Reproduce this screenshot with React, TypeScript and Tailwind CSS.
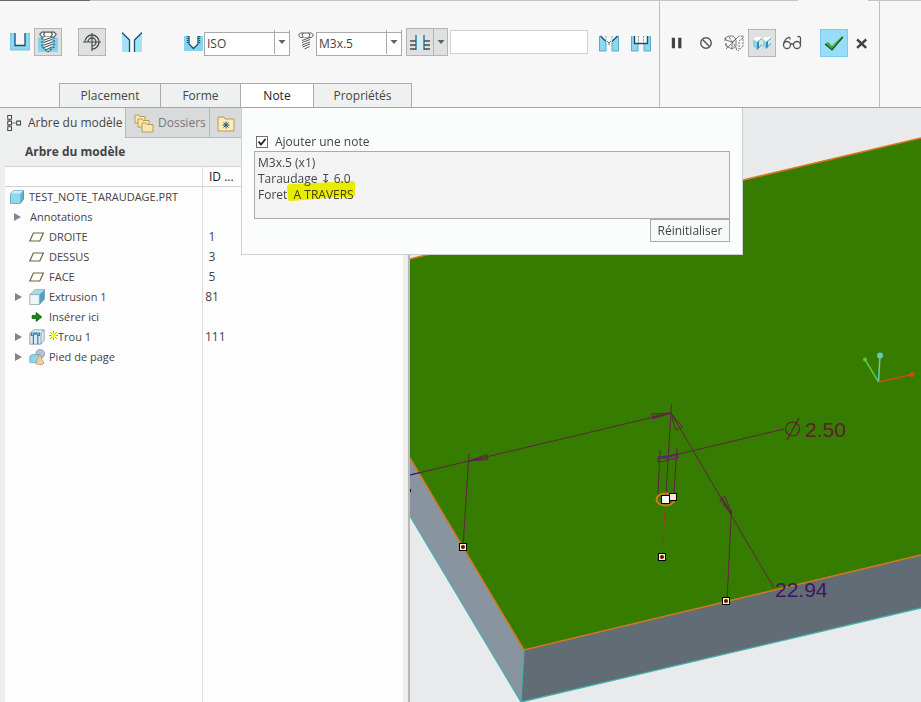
import React, { useState } from "react";

const treeRows = [
  { icon: "plane", label: "DROITE", id: "1", arrow: false },
  { icon: "plane", label: "DESSUS", id: "3", arrow: false },
  { icon: "plane", label: "FACE", id: "5", arrow: false },
  { icon: "extrusion", label: "Extrusion 1", id: "81", arrow: true },
  { icon: "insert", label: "Insérer ici", id: "", arrow: false },
  { icon: "hole", label: "Trou 1", id: "111", arrow: true },
  { icon: "footer", label: "Pied de page", id: "", arrow: true },
];

function Icon({ children, className }: { children: React.ReactNode; className?: string }) {
  return (
    <svg viewBox="0 0 20 20" fill="none" aria-hidden="true" className={className || "h-5 w-5 shrink-0"}>
      {children}
    </svg>
  );
}

// Shared by the hole type button and the screw size label
function ScrewShape() {
  return (
    <g stroke="#555" fill="#fff">
      <path d="M4.500 1h11l2 2-2 2.500h-11l-2-2.500z" />
      <path d="M7.500 1l-1.500 2 1.500 2.500M12.500 1l1.500 2-1.500 2.500" />
      <path d="M6.500 5.500h7v8.500L10 18l-3.500-4z" stroke="none" />
      <path d="M6 8.500l8-3M6 10.500l8-3M6 13l8-3M6.500 15l7.500-3M8.500 17l5-2.500" />
    </g>
  );
}

function TreeIcon({ name }: { name: string }) {
  if (name === "plane")
    return (
      <Icon className="h-4 w-4 shrink-0">
        <path d="M5.500 5h12.500l-4.500 10H1z" fill="#fffef5" stroke="#6f6647" strokeWidth="1.500" />
      </Icon>
    );
  if (name === "extrusion")
    return (
      <Icon className="h-4 w-4 shrink-0">
        <path d="M1 7l7-6.500h11.500v12L13 19.500V7z" fill="#4fa3c4" stroke="#7f96a3" />
        <path d="M1 7l7-6.500h11.500L13 7z" fill="#a9dcea" />
        <path d="M1 7h12v12.500H1z" fill="#eef6fa" stroke="#8fa0ac" />
      </Icon>
    );
  if (name === "insert")
    return (
      <Icon className="h-4 w-4 shrink-0">
        <path d="M4 8h5V4.500l7 5.500-7 5.500V12H4z" fill="#118a11" stroke="#075607" />
      </Icon>
    );
  if (name === "hole")
    return (
      <Icon className="h-4 w-4 shrink-0">
        <path d="M1 5l5-4h13v13l-4.500 5H1z" fill="#dcebf1" stroke="#8796a0" />
        <path d="M15 19V5l4-4" stroke="#8796a0" />
        <path d="M3 5h10v3h-2v11M3 5v3h2.500v11M5.500 8C6 5.500 10.500 5.500 11 8" stroke="#2585a8" strokeWidth="1.500" />
      </Icon>
    );
  return (
    <Icon className="h-4 w-4 shrink-0">
      <circle cx="14" cy="6" r="5.500" fill="#b3c0de" stroke="#8996b8" />
      <path d="M1 9l3-2h8v8l-2 2H1z" fill="#8dd5e8" stroke="#64a8bd" />
      <path d="M13.500 6l5 12c-2 2-8 2-10 0z" fill="#efd29b" stroke="#c09a5d" />
    </Icon>
  );
}

function Expander() {
  return (
    <button type="button" aria-label="Développer" className="flex h-5 w-2 shrink-0 items-center">
      <svg viewBox="0 0 8 10" className="h-[10px] w-2" aria-hidden="true">
        <path d="M0 1l7 4-7 4z" fill="#858585" />
      </svg>
    </button>
  );
}

function DropDown({ label, value }: { label: string; value: string }) {
  return (
    <div className="relative h-6 w-[86px] shrink-0">
      <select
        aria-label={label}
        defaultValue={value}
        className="h-full w-full appearance-none border border-[#a9a9a9] bg-white pl-[2px] text-xs text-[#444]"
      >
        <option>{value}</option>
      </select>
      <span className="pointer-events-none absolute inset-y-0 right-0 flex w-4 items-center justify-center border-x border-[#a9a9a9]">
        <svg viewBox="0 0 8 5" className="h-[5px] w-2" aria-hidden="true">
          <path d="M0.500 0h7L4 4z" fill="#606060" />
        </svg>
      </span>
    </div>
  );
}

function Toolbar() {
  return (
    <div className="flex h-[82px] items-center pl-[6px]">
      <button type="button" aria-label="Trou simple" className="flex h-7 w-7 items-center justify-center">
        <Icon>
          <path d="M0 1h20v17H0z" fill="#8ad8f2" />
          <path d="M5 1h10v12H5z" fill="#f7f7f7" />
          <path d="M5 1v12.500h10V1" stroke="#174f75" strokeWidth="1.300" />
          <path d="M0 1v17h20V1" stroke="#5cacce" strokeWidth=".7" />
        </Icon>
      </button>
      <button type="button" aria-label="Trou standard" className="flex h-7 w-7 items-center justify-center border border-[#b5b5b5] bg-[#dfe0e0]">
        <Icon className="h-[22px] w-[22px]">
          <path d="M1 6h18v13H1z" fill="#85d2ee" />
          <path d="M4.500 6v8.500l5.500 4.500 5.500-4.500V6" stroke="#174f75" strokeDasharray="2 1" />
          <ScrewShape />
        </Icon>
      </button>
      <button type="button" aria-label="Orientation" className="ml-4 flex h-7 w-7 items-center justify-center border border-[#b5b5b5] bg-[#dfe0e0]">
        <Icon>
          <path d="M1 10h18M10 1v18" stroke="#4d4d4d" strokeWidth="1.200" />
          <path d="M3 10a7 7 0 1 1 14 0M10 17a7 7 0 0 0 7-7" stroke="#4d4d4d" strokeWidth="1.300" />
          <path d="M6 10a4 4 0 1 1 4 4" stroke="#4d4d4d" strokeWidth="1.300" />
        </Icon>
      </button>
      <button type="button" aria-label="Fraisage" className="ml-3 flex h-7 w-7 items-center justify-center">
        <Icon>
          <path d="M0 1l7.500 7v12H0zM20 1l-7.500 7v12H20z" fill="#a3e2f6" />
          <path d="M0 .5l7.500 7.500v12M20 .5L12.500 8v12" stroke="#174f75" strokeWidth="1.300" />
        </Icon>
      </button>
      <div className="ml-[38px] flex items-center">
        <Icon>
          <path d="M0 4h19v15H0z" fill="#86d4f0" />
          <path d="M5 4v8l4.500 4.500L14 12V4z" fill="#f7f7f7" />
          <path d="M5 4v8l4.500 4.500L14 12V4" stroke="#174f75" strokeWidth="1.300" />
          <path d="M3.500 4v8M15.500 4v8" stroke="#174f75" strokeWidth="1.500" strokeDasharray="1 1" />
        </Icon>
        <DropDown label="Norme" value="ISO" />
      </div>
      <div className="ml-[6px] flex items-center">
        <Icon>
          <ScrewShape />
        </Icon>
        <DropDown label="Taille de vis" value="M3x.5" />
      </div>
      <button type="button" aria-label="Profondeur" className="ml-1 flex h-7 w-[42px] shrink-0 border border-[#b5b5b5] bg-[#dfe0e0]">
        <span className="flex h-full w-[27px] items-center justify-center border-r border-[#b5b5b5]">
          <Icon>
            <path d="M7 3h6v15H7z" fill="#d6ebf3" />
            <path d="M6 3v15M14 3v15" stroke="#2b82ab" strokeWidth="1.500" />
            <path d="M0 9h6M0 13h6M0 17h6M14 9h6M14 13h6M14 17h6" stroke="#4b4b4b" strokeWidth="1.600" />
          </Icon>
        </span>
        <span className="flex h-full flex-1 items-center justify-center">
          <svg viewBox="0 0 8 5" className="h-[5px] w-2" aria-hidden="true">
            <path d="M0.500 0h7L4 4z" fill="#606060" />
          </svg>
        </span>
      </button>
      <input type="text" aria-label="Valeur" className="ml-[2px] h-6 w-[138px] border border-[#cfcfcf] bg-white px-1 text-xs" />
      <button type="button" aria-label="Ajouter un fraisage" className="ml-[7px] flex h-7 w-7 items-center justify-center">
        <Icon>
          <path d="M0 4h1l6 6v9H0zM20 4h-1l-6 6v9h7z" fill="#8bd8f2" />
          <path d="M.5 4v15H7v-9M19.500 4v15H13v-9" stroke="#5aa9c6" />
          <path d="M1.500 4L7 9.500M18.500 4L13 9.500" stroke="#174f75" strokeWidth="1.400" />
          <path d="M7 4v4M13 4v4" stroke="#8a9a8e" strokeDasharray="2 1" />
          <path d="M8 9l2 2 2-2M10 11v2" stroke="#5b7d6c" />
        </Icon>
      </button>
      <button type="button" aria-label="Ajouter un lamage" className="ml-1 flex h-7 w-7 items-center justify-center">
        <Icon>
          <path d="M0 4h3v7h4v8H0zM20 4h-3v7h-4v8h7z" fill="#8bd8f2" />
          <path d="M.5 4v15H7v-7M19.500 4v15H13v-7" stroke="#5aa9c6" />
          <path d="M3.500 4v7.500h13V4" stroke="#174f75" strokeWidth="1.400" />
          <path d="M7.500 4v7M12.500 4v7" stroke="#8a9a8e" strokeDasharray="2 1" />
        </Icon>
      </button>
    </div>
  );
}

function ControlBar() {
  return (
    <div className="flex h-[84px] items-center pl-2">
      <button type="button" aria-label="Pause" className="flex h-7 w-[18px] items-center justify-center">
        <Icon className="h-5 w-4 shrink-0">
          <path d="M5.500 3.500v13M13.500 3.500v13" stroke="#424242" strokeWidth="4" />
        </Icon>
      </button>
      <button type="button" aria-label="Aucun aperçu" className="ml-[6px] flex h-7 w-7 items-center justify-center">
        <Icon className="h-[14px] w-[14px]">
          <circle cx="10" cy="10" r="7.500" stroke="#555" strokeWidth="2" />
          <path d="M5 5l10 10" stroke="#555" strokeWidth="2" />
        </Icon>
      </button>
      <button type="button" aria-label="Aperçu détaché" className="flex h-7 w-7 items-center justify-center">
        <Icon>
          <g stroke="#666" strokeWidth=".9">
            <path d="M1 5l4-2h4l3 3-4 3-6-2zM1 5v3M8 9v7l-6-3v-3M8 16l4-3V7" />
            <path d="M12 6l3-3h4M19 3v10l-5 5-3-3M19 5l-4 3v8" strokeDasharray="2 1" />
            <path d="M2 16L14 4M5 4l8 12M1 11l4 3" strokeDasharray="3 1" />
          </g>
        </Icon>
      </button>
      <button type="button" aria-label="Aperçu attaché" className="flex h-7 w-7 items-center justify-center border border-[#b5b5b5] bg-[#dfe0e0]">
        <Icon>
          <path d="M1 6l3-2h6l-1 3-4 2zM11 6l2-2h6l-1 2-4 3z" fill="#fff" />
          <path d="M1 6l4 3v8l-4-4zM11 6l3 3v7l-3-3z" fill="#8bd0e8" />
          <path d="M5 9l5-4v7l-5 5zM14 9l5-4v6l-5 5z" fill="#2f8fb5" />
          <path d="M7 8l3-2v5l-3 3zM16 8l3-2v4l-3 3z" fill="#c9eaf4" />
        </Icon>
      </button>
      <button type="button" aria-label="Vérifier" className="ml-[2px] flex h-7 w-7 items-center justify-center">
        <Icon>
          <g stroke="#555" strokeWidth="1.300">
            <circle cx="5" cy="12" r="3.500" />
            <circle cx="15" cy="12" r="3.500" />
            <path d="M8.500 11.500c1-1 2-1 3 0M1.500 11C2 8 5 4 7.500 4.500c1 .3.500 1.500.5 2M18.500 12V5c0-1.500-2-2-3-1" />
          </g>
        </Icon>
      </button>
      <button type="button" aria-label="Valider" className="ml-[14px] flex h-7 w-7 items-center justify-center border border-[#78cdf0] bg-[#99dcf7]">
        <Icon>
          <path d="M1 11l3-2 4 4L17.500 3.500l1.500.5L8 17z" fill="#46a843" />
          <path d="M1 11l7 6L19 4" stroke="#14591d" strokeWidth="1.200" />
        </Icon>
      </button>
      <button type="button" aria-label="Annuler" className="flex h-7 w-7 items-center justify-center">
        <Icon className="h-[14px] w-[14px]">
          <path d="M3 5l13 12M16 5L3 17" stroke="#424242" strokeWidth="3.500" />
        </Icon>
      </button>
    </div>
  );
}

function NotePanel() {
  const [addNote, setAddNote] = useState(true);
  const [note, setNote] = useState("M3x.5 (x1)\nTaraudage ↧ 6.0\nForet  A TRAVERS");

  return (
    <section
      aria-label="Note"
      className="absolute top-full left-0 z-10 mt-px w-[502px] border border-t-0 border-[#cfcfcf] bg-[#fbfcfc] px-3 pt-[25px] pb-3"
    >
      <label className="flex h-[18px] items-center gap-[7px] text-xs text-[#444]">
        <input
          type="checkbox"
          checked={addNote}
          onChange={(e) => setAddNote(e.target.checked)}
          className="peer sr-only"
        />
        <span className="ml-[2px] flex h-3 w-3 items-center justify-center border border-[#707070] bg-white text-transparent peer-checked:text-[#222]">
          <svg viewBox="0 0 10 10" fill="none" className="h-[10px] w-[10px]" aria-hidden="true">
            <path d="M1.500 4.500l2.500 3L8.500 2" stroke="currentColor" strokeWidth="1.800" />
          </svg>
        </span>
        Ajouter une note
      </label>
      <div className="relative">
        <textarea
          aria-label="Texte de la note"
          value={note}
          onChange={(e) => setNote(e.target.value)}
          className="block h-[68px] w-full resize-none border border-[#ababab] bg-[#f3f3f3] px-[3px] py-[3px] font-['Open_Sans','DejaVu_Sans',sans-serif] text-xs leading-4 text-[#444]"
        />
        <svg viewBox="0 0 70 22" className="pointer-events-none absolute top-[29px] left-8 h-[22px] w-[70px] mix-blend-multiply" aria-hidden="true">
          <path d="M1 7q0-3 4-3L30 3 66 1q4 0 3 5v8q0 3-4 3H50L6 21q-4 1-4-2z" fill="#f4f800" />
        </svg>
      </div>
      <div className="flex justify-end">
        <button type="button" className="h-[23px] w-20 border border-[#ababab] bg-[#f7f8f8] text-xs text-[#444]">
          Réinitialiser
        </button>
      </div>
    </section>
  );
}

function ModelTree() {
  return (
    <aside className="flex w-[410px] shrink-0 flex-col border-r-2 border-[#b7b8b9] bg-[#eef0f0]">
      <div className="flex h-[30px] shrink-0 text-xs">
        <button type="button" className="flex w-[125px] items-center gap-[6px] pl-[7px] whitespace-nowrap text-[#444]">
          <Icon className="h-5 w-[15px] shrink-0">
            <path d="M3 4v12M5 10h9" stroke="#555" />
            <path d="M1 0h5v5H1zM1 7.500h5v5H1zM1 15h5v5H1zM13 7.500h5v5h-5z" fill="#fff" stroke="#444" strokeWidth="1.400" />
          </Icon>
          Arbre du modèle
        </button>
        <button type="button" className="flex w-[84px] shrink-0 items-center gap-1 border-b border-l border-[#b8b9ba] bg-[#d9dadb] pl-2 text-[#777]">
          <Icon>
            <g fill="#f8e7ae" stroke="#b99a5c">
              <path d="M1 2h4l1 1.500h5V10H1z" />
              <path d="M4 6h4l1 1.500h6V14H4z" />
              <path d="M8 10h4l1 1.500h6V19H8z" />
            </g>
          </Icon>
          Dossiers
        </button>
        <button type="button" aria-label="Favoris" className="flex flex-1 items-center border-b border-l border-[#b8b9ba] bg-[#d9dadb] pl-[6px]">
          <Icon>
            <path d="M2 4h6l1 2h9v12H2z" fill="#fbebb9" stroke="#b99a5c" />
            <path d="M10 8.500v7M6.500 12h7M7.500 9.500l5 5M12.500 9.500l-5 5" stroke="#1b5270" />
          </Icon>
        </button>
      </div>
      <h2 className="flex h-7 shrink-0 items-center pl-[25px] text-xs font-bold text-[#444]">Arbre du modèle</h2>
      <div className="mr-[5px] ml-[5px] flex-1 bg-[#fdfdfd] bg-[linear-gradient(to_right,transparent_197px,#dcdedf_197px,#dcdedf_198px,transparent_198px)]">
        <table className="w-full table-fixed border-collapse text-left text-[11px] text-[#444]">
          <thead>
            <tr className="h-5 border-y border-[#d0d2d3]">
              <th aria-label="Nom" className="w-[200px] p-0" />
              <th className="p-0 pl-1 text-xs font-normal text-[#222]">ID ...</th>
            </tr>
          </thead>
          <tbody>
            <tr className="h-5">
              <td className="p-0">
                <div className="flex h-5 items-center gap-1 pl-1">
                  <Icon className="h-4 w-4 shrink-0">
                    <path d="M2 6l4-4h12v11l-4 5H2z" fill="#62b5d0" stroke="#347f9b" />
                    <path d="M2 6l4-4h12l-4 4z" fill="#c8f0f7" />
                    <path d="M2 6h12v12H2z" fill="#8ed9ec" />
                  </Icon>
                  TEST_NOTE_TARAUDAGE.PRT
                </div>
              </td>
              <td className="p-0" />
            </tr>
            <tr className="h-5">
              <td className="p-0">
                <div className="flex h-5 items-center gap-2 pl-[9px]">
                  <Expander />
                  Annotations
                </div>
              </td>
              <td className="p-0" />
            </tr>
            {treeRows.map((row) => (
              <tr key={row.label} className="h-5">
                <td className="p-0">
                  <div className="flex h-5 items-center pl-[10px]">
                    {row.arrow ? <Expander /> : <span className="w-2" />}
                    <span className="ml-[6px] flex">
                      <TreeIcon name={row.icon} />
                    </span>
                    <span className="ml-1 flex items-center">
                      {row.icon === "hole" && (
                        <svg viewBox="0 0 10 10" className="mb-1 h-[9px] w-[9px]" aria-hidden="true">
                          <path d="M5 0v10M0 5h10M1 1l8 8M9 1L1 9" stroke="#a39d0a" />
                          <circle cx="5" cy="5" r="2.500" fill="#fbff00" />
                        </svg>
                      )}
                      {row.label}
                    </span>
                  </div>
                </td>
                <td className="p-0 text-xs">
                  <span className="inline-block min-w-[14px] text-center">{row.id}</span>
                </td>
              </tr>
            ))}
          </tbody>
        </table>
      </div>
    </aside>
  );
}

function Handle({ x, y }: { x: number; y: number }) {
  return (
    <g>
      <rect x={x - 3.5} y={y - 3.5} width="7" height="7" fill="#fff3c4" stroke="#000" />
      <circle cx={x} cy={y} r="2" fill="#5d1414" />
    </g>
  );
}

function Viewport() {
  return (
    <svg
      viewBox="410 108 511 594"
      preserveAspectRatio="xMidYMid slice"
      className="min-w-0 flex-1"
      role="img"
      aria-label="Vue 3D de la pièce"
    >
      <rect x="0" y="0" width="1400" height="1200" fill="#e8eaeb" />
      <path d="M410 259L420 256.500L921 138V555L524 650L410 458z" fill="#367c00" />
      <path d="M410 458L524 650L521 702L410 516z" fill="#8994a1" />
      <path d="M524 650L921 555V608L521 702z" fill="#626c75" />
      <path d="M410 516L521 702L921 608M524 650L521 702" fill="none" stroke="#43b0ae" strokeWidth="1.300" />
      <path d="M410 259L420 256.500L921 138M410 458L524 650L921 555" fill="none" stroke="#d8761b" strokeWidth="1.500" />

      {/* Dimension lines */}
      <g fill="none" stroke="#602344">
        <path d="M410 475L671 413M469 454L463 547M671.500 404L666 494" />
        <path d="M671 413L774 588M731.500 509L727 601" />
        <path d="M660 450L658 494M677 448L674 493M658 459L784 429" />
        <path d="M469 461L487 454.500L488 459.500zM671 413L652 414L653 419zM671 413L675.500 430L682.500 427zM731.500 514L719.500 499.500L725 496z" />
        <path d="M469 461L487 457M671 413L652 417M731.500 514L722 498" strokeWidth="1.300" />
        <path d="M658 457l9-1v5l-9 1zM667 457l11-4v5l-11 2" stroke="#612060" />
      </g>
      <path d="M663 458l12-3" stroke="#602070" strokeWidth="2" />
      <path d="M410 475L420 472.500" stroke="#202060" />
      <path d="M410 489h1v3h-1z" fill="#111" />
      <path d="M665 512L663 548" stroke="#8b461a" strokeWidth="1.300" strokeDasharray="13 7" />

      {/* Hole */}
      <ellipse cx="665.500" cy="499.500" rx="9" ry="6" fill="none" stroke="#d8761b" strokeWidth="2" />
      <rect x="669.500" y="493.500" width="7" height="7" fill="#ffe8d0" stroke="#000" />
      <rect x="661.500" y="495.500" width="8" height="8" fill="#fff" stroke="#000" />
      <Handle x={463} y={547} />
      <Handle x={662} y={557} />
      <Handle x={726} y={601} />

      <g fill="none" stroke="#5c2030" strokeWidth="1.200">
        <circle cx="792.500" cy="429" r="7" />
        <path d="M787 440L799 418" />
      </g>
      <text x="805" y="437" fill="#5c2030" className="font-['Liberation_Sans',sans-serif] text-[21px]">
        2.50
      </text>
      <text x="775" y="597" fill="#3d1662" className="font-['Liberation_Sans',sans-serif] text-[21px]">
        22.94
      </text>

      {/* Orientation axes */}
      <g strokeWidth="1.500">
        <path d="M878.500 382L865 359.500" stroke="#5fc93b" />
        <path d="M878.500 382L880 356" stroke="#65cbb5" />
        <path d="M878.500 382L912 374.500" stroke="#d6451c" />
      </g>
      <circle cx="865" cy="359.500" r="2" fill="#5fc93b" />
      <circle cx="880" cy="355.500" r="3" fill="#65cbb5" />
      <circle cx="912" cy="374.500" r="2.500" fill="#d6451c" />
    </svg>
  );
}

export default function App() {
  return (
    <div className="flex min-h-screen flex-col bg-[#e8eaeb] font-['Open_Sans',sans-serif]">
      <div className="flex h-px bg-[#f7f7f7]">
        <div className="w-[90px] bg-[#6a6568]" />
        <div className="w-[708px] bg-[#c4c4c4]" />
        <div className="ml-[70px] flex-1 bg-[#c4c4c4]" />
      </div>
      <header className="flex border-b border-[#a5a5a5] bg-[#f7f7f7]">
        <div className="w-[660px] shrink-0 border-r border-[#bdbdbd]">
          <Toolbar />
          <nav className="flex h-6 pl-[59px] text-xs text-[#444]">
            <button type="button" className="w-[102px] border border-b-0 border-[#ababab] bg-[#eff1f1]">
              Placement
            </button>
            <button type="button" className="w-20 border-t border-r border-[#ababab] bg-[#eff1f1]">
              Forme
            </button>
            <div className="relative w-[72px]">
              <button type="button" className="h-full w-full border-t border-[#ababab] bg-white text-[#222]">
                Note
              </button>
              <NotePanel />
            </div>
            <button type="button" className="w-[99px] border border-b-0 border-[#ababab] bg-[#eff1f1]">
              Propriétés
            </button>
          </nav>
        </div>
        <div className="w-[220px] shrink-0 border-r border-[#bdbdbd]">
          <ControlBar />
        </div>
      </header>
      <main className="flex flex-1">
        <ModelTree />
        <Viewport />
      </main>
    </div>
  );
}
